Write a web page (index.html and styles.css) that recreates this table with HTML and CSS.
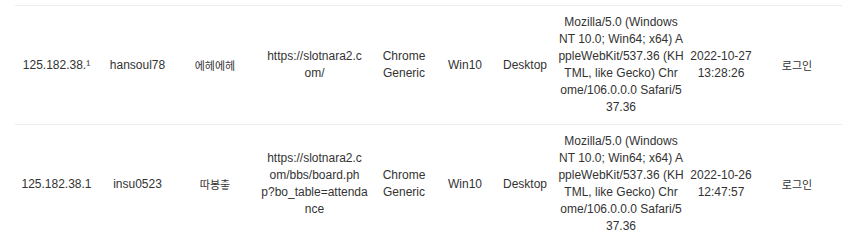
FILE: index.html
```html
<!DOCTYPE html>
<html lang="ko">
<head>
<meta charset="utf-8">
<title>접속 기록</title>
<link rel="stylesheet" href="styles.css">
</head>
<body>
<table class="log">
  <colgroup>
    <col class="c-ip"><col class="c-id"><col class="c-nick"><col class="c-url"><col class="c-br">
    <col class="c-os"><col class="c-dev"><col class="c-ua"><col class="c-date"><col class="c-act">
  </colgroup>
  <tbody>
    <tr>
      <td>125.182.38.¹</td>
      <td>hansoul78</td>
      <td class="ko">에헤에헤</td>
      <td>https://slotnara2.c<br>om/</td>
      <td>Chrome<br>Generic</td>
      <td>Win10</td>
      <td>Desktop</td>
      <td>Mozilla/5.0 (Windows<br>NT 10.0; Win64; x64) A<br>ppleWebKit/537.36 (KH<br>TML, like Gecko) Chr<br>ome/106.0.0.0 Safari/5<br>37.36</td>
      <td>2022-10-27<br>13:28:26</td>
      <td class="ko">로그인</td>
    </tr>
    <tr>
      <td>125.182.38.1</td>
      <td>insu0523</td>
      <td class="ko">따봉춯</td>
      <td>https://slotnara2.c<br>om/bbs/board.ph<br>p?bo_table=attenda<br>nce</td>
      <td>Chrome<br>Generic</td>
      <td>Win10</td>
      <td>Desktop</td>
      <td>Mozilla/5.0 (Windows<br>NT 10.0; Win64; x64) A<br>ppleWebKit/537.36 (KH<br>TML, like Gecko) Chr<br>ome/106.0.0.0 Safari/5<br>37.36</td>
      <td>2022-10-26<br>12:47:57</td>
      <td class="ko">로그인</td>
    </tr>
  </tbody>
</table>
</body>
</html>
```
FILE: styles.css
```css
html, body {
  margin: 0;
  padding: 0;
  background: #fff;
}

body {
  padding: 5px 0 0 15px;
  font-family: "Liberation Sans", Arial, "Noto Sans CJK KR", sans-serif;
  font-size: 12px;
  color: #333;
}

.log {
  width: 827px;
  table-layout: fixed;
  border-collapse: collapse;
  border-top: 1px solid #ececec;
}

.c-ip { width: 83px; }
.c-id { width: 79px; }
.c-nick { width: 76px; }
.c-url { width: 123px; }
.c-br { width: 56px; }
.c-os { width: 66px; }
.c-dev { width: 54px; }
.c-ua { width: 138px; }
.c-date { width: 62px; }
.c-act { width: 90px; }

.log td {
  padding: 8px 0;
  height: 102px;
  line-height: 17px;
  text-align: center;
  vertical-align: middle;
  white-space: nowrap;
  border-bottom: 1px solid #ececec;
}

.log td.ko {
  font-family: "Noto Sans CJK KR", "Liberation Sans", sans-serif;
  font-size: 11px;
}
```
